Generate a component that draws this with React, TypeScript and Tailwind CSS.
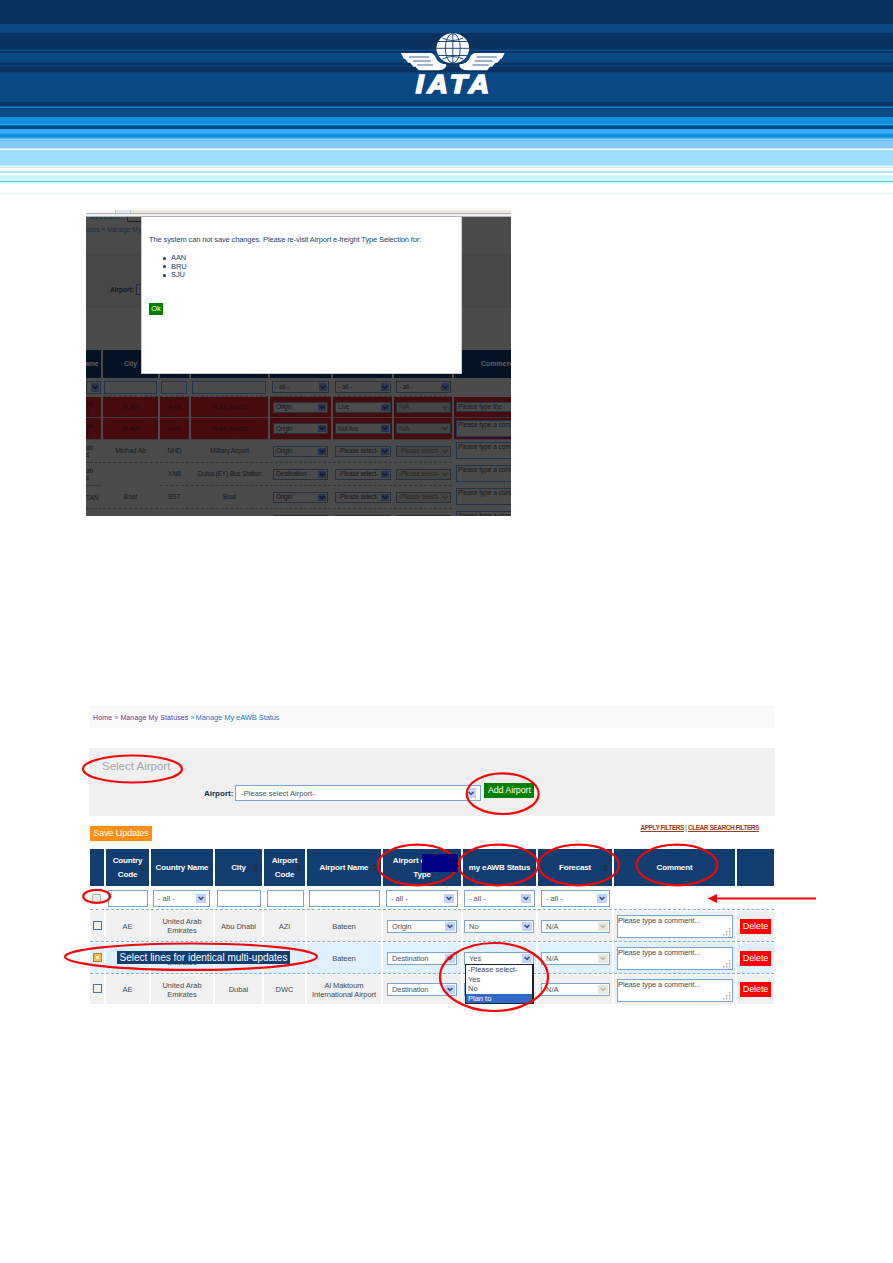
import React from "react";

const stripes: [number, string][] = [
  [24, "#0a3261"], [9, "#084885"], [16, "#0a3261"], [1, "#0a3c70"], [1, "#0a5090"], [1, "#0a3261"], [1, "#0a3668"],
  [9, "#084885"], [1, "#0a3a6b"], [2, "#0a3261"], [2, "#0a4275"], [5, "#0a3261"], [1, "#0a4275"], [29, "#084885"],
  [4, "#0a3261"], [1, "#0a62ac"], [1, "#1380cd"], [9, "#084885"], [7, "#1290e0"], [1, "#2aa3ec"], [1, "#0f70b5"],
  [3, "#084885"], [4, "#35acf4"], [1, "#2a9ce8"], [3, "#1290e0"], [1, "#2a9de8"], [1, "#55b4f2"], [1, "#96d5ff"],
  [1, "#62b9f2"], [7, "#86caff"], [1, "#c4e6ff"], [1, "#ffffff"], [15, "#a0deff"], [1, "#c4ecff"], [1, "#ffffff"],
  [1, "#c9f3fa"], [3, "#fdfdfd"], [2, "#b4e6ff"], [2, "#ffffff"], [6, "#cdf8ff"], [1, "#6fbcd8"], [2, "#d4fff8"],
  [9, "#ffffff"], [1, "#d6f5f5"],
];

function Wing() {
  return (
    <>
      <path d="M1 23H31Q34.5 24 36.5 29Q38.5 33.5 46.5 34.5Q46 40.5 37 40.3H18.5L15.5 36.7H13.5L10 32.8H8.2L5 28.8H3.8Z" fill="#fff" />
      <path d="M9 27H29M13 31H31M17 35H33" stroke="#0a4079" strokeWidth="0.8" />
    </>
  );
}

function Logo() {
  return (
    <svg className="absolute left-[400px] top-[30px]" width="106" height="68" viewBox="0 0 106 68">
      <ellipse cx="52.8" cy="18.3" rx="16.4" ry="15" fill="#fff" />
      <g stroke="#0a3b70" strokeWidth="0.9" fill="none">
        <path d="M52.8 3v31M38 11.5h29.6M36.5 18.3h32.6M38 25.5h29.6" />
        <ellipse cx="52.8" cy="18.3" rx="7.5" ry="14.8" />
        <path d="M42.5 8q10 5 20.6 0M42.5 29q10-5 20.6 0" />
      </g>
      <Wing />
      <g transform="translate(105.6 0) scale(-1 1)"><Wing /></g>
      <text transform="translate(15.8 62.6) scale(1.1 1)" fontFamily="Liberation Sans" fontWeight="700" fontStyle="italic" fontSize="25.5" textLength="66.5" fill="#fff" stroke="#fff" strokeWidth="1.7">IATA</text>
    </svg>
  );
}

function Arrow({ tone }: { tone: "blue" | "gray" | "dim" | "dimgray" }) {
  const bg = { blue: "bg-[#c3d3fb]", gray: "bg-[#e9e8e0]", dim: "bg-[#2c3550]", dimgray: "bg-[#454541]" }[tone];
  const st = { blue: "#405080", gray: "#bcbbb0", dim: "#101a30", dimgray: "#2f2f2c" }[tone];
  return (
    <span className={`flex h-full shrink-0 items-center justify-center ${tone.startsWith("dim") ? "w-[8px]" : "w-[10px]"} ${bg}`}>
      <svg width="6" height="5" viewBox="0 0 6 5"><path d="M.6 1L3 3.4L5.4 1" stroke={st} strokeWidth="1.6" fill="none" /></svg>
    </span>
  );
}

function Pick({ text, cls, tone = "blue" }: { text: string; cls: string; tone?: "blue" | "gray" | "dim" | "dimgray" }) {
  const dim = tone.startsWith("dim");
  return (
    <div className={`flex items-center justify-between border p-px ${dim ? "border-[#252f3d] pl-[2px]" : "border-[#7ba6d2] bg-white pl-[4px] text-[#4a5560]"} ${tone === "dimgray" ? "bg-[#454541] text-[#262626]" : ""} ${cls}`}>
      <span className="whitespace-nowrap">{text}</span>
      <Arrow tone={tone} />
    </div>
  );
}

const dimGrid = "grid w-[425px] grid-cols-[15px_55px_29px_77px_61px_59px_58px_57px] gap-x-[2px]";
const dimDash = "border-b border-dashed border-[#2e363f]";

const dimRows = [
  { red: true, h: "h-[21px]", a: ["ab", "s"], city: "Al Ain", code: "AAN", name: "Al Ain Airport", type: "Origin", st: "Live", fc: "N/A", c: "Please type the" },
  { red: true, h: "h-[22px]", a: ["ab", "s"], city: "Al Ain", code: "AAN", name: "Al Ain Airport", type: "Origin", st: "Not live", fc: "N/A", c: "Please type a comment..." },
  { red: false, h: "h-[23px]", a: ["ab", "s"], city: "Minhad Ab", code: "NHD", name: "Military Airport", type: "Origin", st: "-Please select-", fc: "-Please select-", c: "Please type a comment..." },
  { red: false, h: "h-[23px]", a: ["ab", "s"], city: "", code: "XNB", name: "Dubai (EY) Bus Station", type: "Destination", st: "-Please select-", fc: "-Please select-", c: "Please type a comment..." },
  { red: false, h: "h-[23px]", a: ["TAN"], city: "Boat", code: "BST", name: "Boat", type: "Origin", st: "-Please select-", fc: "-Please select-", c: "Please type a comment..." },
  { red: false, h: "h-[23px]", a: [], city: "", code: "", name: "", type: "Origin", st: "-Please select-", fc: "-Please select-", c: "Please type a comment..." },
];

function ErrorShot() {
  return (
    <section className="relative ml-[86px] mt-[16px] h-[306px] w-[425px] overflow-hidden bg-[#4b4b4b] text-[6.5px] leading-[8px] text-[#14181e]">
      <div className="flex h-[3px]">
        <div className="w-[29px] bg-[#f5f6fc]" />
        <div className="w-[16px] border-x border-[#b8c4d8] bg-[#dde6f8]" />
        <div className="flex-1 bg-[#ece9d8]" />
      </div>
      <div className="h-[4px] border-y border-[#b0b3b5] bg-[#f1f1ef]" />
      <div className="flex h-[36px] flex-col justify-between overflow-hidden whitespace-nowrap pb-[19px] text-[#16304c]">
        <div className="-mt-[4px] flex gap-[4px] pl-[4px] font-bold"><span className="tracking-[.6px]">Account:</span><span className="h-[9px] w-[30px] border border-[#222]" /></div>
        <div>uses » Manage My e-</div>
      </div>
      <div className="flex h-[55px] items-end gap-[2px] bg-[#474747] pb-[13px] pl-[24px]">
        <span className="pb-[1px] font-bold text-[#111820]">Airport:</span>
        <span className="h-[11px] w-[200px] border border-[#1d2c40] pl-[2px]">-</span>
      </div>
      <div className="h-[42px]" />
      <div className={`${dimGrid} h-[28px] text-center text-[7px] font-bold text-[#59616b] [&>div]:bg-[#051225] [&>div]:pt-[10px]`}>
        <div className="overflow-hidden text-left"><span className="-ml-[1px] tracking-[-.2px]">ame</span></div><div>City</div><div /><div /><div /><div /><div />
        <div className="overflow-hidden whitespace-nowrap text-left"><span className="ml-[27px]">Comment</span></div>
      </div>
      <div className={`${dimGrid} h-[19px]`}>
        <div className="flex items-start justify-end pt-[3px]"><Pick tone="dim" text="" cls="h-[13px] w-[15px]" /></div>
        {["w-[53px]", "w-[26px]", "w-[74px]"].map((w) => <div key={w} className={`pl-[1px] pt-[3px] ${dimDash}`}><div className={`h-[13px] border border-[#1e3450] ${w}`} /></div>)}
        {["w-[57px]", "w-[56px]", "w-[55px]"].map((w) => <div key={w} className={`pl-[2px] pt-[3px] ${dimDash}`}><Pick tone="dim" text="- all -" cls={`h-[12px] ${w}`} /></div>)}
      </div>
      {dimRows.map((r, i) => {
        const bg = r.red ? "border-b border-[#3f3b41] bg-[#470b0e] bg-clip-padding" : r.city || i !== 2 ? dimDash : "";
        const dimText = r.red ? "text-[#22090c]" : "";
        return (
          <div key={i} className={`${dimGrid} ${r.h} text-center`}>
            <div className={`flex flex-col items-start justify-center overflow-hidden leading-[7px] ${bg} ${dimText}`}>{r.a.map((t) => <span key={t}>{t}</span>)}</div>
            <div className={`flex items-center justify-center ${i === 3 ? "" : bg} ${dimText}`}>{r.city}</div>
            <div className={`flex items-center justify-center ${bg} ${dimText}`}>{r.code}</div>
            <div className={`flex items-center justify-center whitespace-nowrap tracking-[-.15px] ${bg} ${dimText}`}>{r.name}</div>
            <div className={`flex items-center pl-[3px] tracking-[-.2px] ${bg}`}><Pick tone="dim" text={r.type} cls="h-[11px] w-[55px] bg-[#4b4b4b]" /></div>
            <div className={`flex items-center pl-[2px] tracking-[-.2px] ${bg}`}><Pick tone="dim" text={r.st} cls="h-[11px] w-[56px] bg-[#4b4b4b]" /></div>
            <div className={`flex items-center pl-[2px] tracking-[-.2px] ${bg}`}><Pick tone="dimgray" text={r.fc} cls="h-[11px] w-[55px]" /></div>
            <div className={`overflow-hidden ${r.red ? bg : ""} ${i === 0 ? "pt-[5px]" : "pt-[2px]"}`}>
              <div className={`ml-[2px] w-[70px] whitespace-nowrap border border-[#1e3450] bg-[#4b4b4b] pl-px text-left leading-[8px] tracking-[-.05px] ${i === 0 ? "h-[10px]" : "h-[17px]"}`}>{r.c}</div>
            </div>
          </div>
        );
      })}
      <div className="absolute left-[55px] top-[7px] h-[157px] w-[321px] border border-t-0 border-[#c9cccc] bg-white pl-[7px] pt-[18px] text-[7.5px] leading-[9px] text-[#24476b]">
        <p className="whitespace-nowrap tracking-[-.12px]">The system can not save changes. Please re-visit Airport e-freight Type Selection for:</p>
        <ul className="mt-[10px] pl-[14px] text-[7.5px] leading-[8.6px]">
          {["AAN", "BRU", "SJU"].map((c) => (
            <li key={c} className="flex items-center gap-[5px] tracking-[-.1px]"><span className="size-[3px] rounded-full bg-[#163a60]" />{c}</li>
          ))}
        </ul>
        <button className="mt-[23px] block h-[12px] w-[14px] bg-[#008000] text-center text-[7.5px] leading-[12px] text-white">Ok</button>
      </div>
    </section>
  );
}

const grid = "grid w-[684px] grid-cols-[14px_43px_62px_47px_41px_74px_78px_73px_74px_121px_37px] gap-x-[2px]";

function Head({ lines, sort = true }: { lines: string[]; sort?: boolean }) {
  return (
    <div className="relative flex flex-col items-center justify-center whitespace-nowrap bg-[#113d70] text-[8px] font-bold leading-[14px] tracking-[-.15px] text-white">
      {sort && <svg className="absolute right-[4px] top-[15px]" width="5" height="7" viewBox="0 0 5 7"><path d="M0 3L2.5 0L5 3ZM0 4L2.5 7L5 4Z" fill="#272f38" /></svg>}
      {lines.map((l) => <span key={l} className="relative">{l}</span>)}
    </div>
  );
}

function Check({ on = false }: { on?: boolean }) {
  return <span className={`-mt-[2px] block size-[9px] border ${on ? "border-[#a98238] bg-[#fbe9b8] shadow-[inset_0_0_0_2px_#f5bd4a]" : "border-[#4d759f] bg-[#f1f1ec]"}`} />;
}

const rows = [
  { bg: "bg-[#f0f0f0]", on: false, cc: "AE", cn: ["United Arab", "Emirates"], city: "Abu Dhabi", code: "AZI", name: ["Bateen"], type: "Origin", st: "No" },
  { bg: "bg-[#e0f0ff]", on: true, cc: "", cn: ["", "Emirates"], city: "", code: "", name: ["Bateen"], type: "Destination", st: "Yes" },
  { bg: "bg-[#f0f0f0]", on: false, cc: "AE", cn: ["United Arab", "Emirates"], city: "Dubai", code: "DWC", name: ["Al Maktoum", "International Airport"], type: "Destination", st: "" },
];
const dash = "border-b border-dashed border-[#86add5]";

function StatusTable() {
  return (
    <div className="ml-[90px] mt-[8px] w-[684px] text-[7.5px] leading-[9px] text-[#424c56]">
      <div className={`${grid} h-[37px]`}>
        <Head lines={[]} sort={false} /><Head lines={["Country", "Code"]} /><Head lines={["Country Name"]} /><Head lines={["City"]} /><Head lines={["Airport", "Code"]} />
        <Head lines={["Airport Name"]} /><Head lines={["Airport e-freight", "Type"]} sort={false} /><Head lines={["my eAWB Status"]} /><Head lines={["Forecast"]} /><Head lines={["Comment"]} sort={false} /><Head lines={[]} sort={false} />
      </div>
      <div className={`${grid} h-[25px]`}>
        <div className={`h-[24px] pl-[2px] pt-[8px] ${dash}`}><span className="block size-[9px] border border-[#b5bec4] bg-[#ebebe6]" /></div>
        <div className={`pl-[2px] pt-[4px] ${dash} h-[24px]`}><div className="h-[17px] w-[40px] border border-[#7ba6d2]" /></div>
        <div className={`pl-[2px] pt-[4px] ${dash} h-[24px]`}><Pick text="- all -" cls="h-[17px] w-[57px] py-[3px] pr-[3px]" /></div>
        <div className={`pl-[2px] pt-[4px] ${dash} h-[24px]`}><div className="h-[17px] w-[44px] border border-[#7ba6d2]" /></div>
        <div className={`pl-[3px] pt-[4px] ${dash} h-[24px]`}><div className="h-[17px] w-[37px] border border-[#7ba6d2]" /></div>
        <div className={`pl-[2px] pt-[4px] ${dash} h-[24px]`}><div className="h-[17px] w-[71px] border border-[#7ba6d2]" /></div>
        <div className={`pl-[3px] pt-[4px] ${dash} h-[24px]`}><Pick text="- all -" cls="h-[17px] w-[72px] py-[3px] pr-[3px]" /></div>
        <div className={`pl-[1px] pt-[4px] ${dash} h-[24px]`}><Pick text="- all -" cls="h-[17px] w-[71px] py-[3px] pr-[3px]" /></div>
        <div className={`pl-[3px] pt-[4px] ${dash} h-[24px]`}><Pick text="- all -" cls="h-[17px] w-[69px] py-[3px] pr-[2px]" /></div>
        <div className={`h-[24px] ${dash}`} /><div className={`h-[24px] ${dash}`} />
      </div>
      {rows.map((r, i) => {
        const b = `${r.bg} ${i < 2 ? dash : ""}`;
        return (
          <div key={i} className={`${grid} text-center ${i < 2 ? "mb-[1px] h-[31px]" : "h-[29px]"}`}>
            <div className={`flex items-center justify-center ${b}`}><Check on={r.on} /></div>
            <div className={`flex items-center justify-center ${b}`}>{r.cc}</div>
            <div className={`flex flex-col items-center justify-center ${b}`}>{r.cn.map((t, k) => <span key={k} className="h-[9px]">{t}</span>)}</div>
            <div className={`flex items-center justify-center ${b}`}>{r.city}</div>
            <div className={`flex items-center justify-center ${b}`}>{r.code}</div>
            <div className={`flex flex-col items-center justify-center whitespace-nowrap ${b}`}>{r.name.map((t) => <span key={t} className="tracking-[-.05px]">{t}</span>)}</div>
            <div className={`flex items-center pl-[4px] tracking-[-.1px] ${b}`}><Pick text={r.type} cls="h-[13px] w-[70px]" /></div>
            <div className={`relative flex items-center pl-[1px] ${b}`}>
              <Pick text={r.st} cls="h-[13px] w-[70px]" />
              {r.on && (
                <div className="absolute left-[2px] top-[21px] z-10 h-[40px] w-[69px] border border-r-2 border-[#182330] bg-white text-left leading-[9.6px]">
                  {["-Please select-", "Yes", "No"].map((t) => <div key={t} className="pl-[2px]">{t}</div>)}
                  <div className="bg-[#316ac5] pl-[2px] text-white">Plan to</div>
                </div>
              )}
            </div>
            <div className={`flex items-center pl-[3px] ${b}`}><Pick tone="gray" text="N/A" cls="h-[13px] w-[69px]" /></div>
            <div className={`pl-[3px] pt-[4px] ${b}`}>
              <div className="flex h-[23px] w-[116px] justify-between border border-[#7ba6d2] bg-white text-left">
                <span className="whitespace-nowrap tracking-[-.1px]">Please type a comment...</span>
                <svg className="mb-[1px] mr-[1px] shrink-0 self-end" width="8" height="8" viewBox="0 0 8 8"><path d="M6 0h1.4v1.4H6zM3 3h1.4v1.4H3zM6 3h1.4v1.4H6zM0 6h1.4v1.4H0zM3 6h1.4v1.4H3zM6 6h1.4v1.4H6z" fill="#aaa" /></svg>
              </div>
            </div>
            <div className={`flex items-center pl-[3px] ${b}`}><button className="h-[15px] w-[31px] bg-[#ff0000] text-[9px] leading-[15px] tracking-[-.1px] text-white">Delete</button></div>
          </div>
        );
      })}
    </div>
  );
}

const rings = [
  [132.5, 769, 49.5, 13.5], [502.7, 793.7, 36, 20.3], [96.7, 896.3, 13.5, 6.5], [191, 956.7, 126, 13.2],
  [417.5, 865, 39.7, 20.3], [498.3, 865, 39.9, 20.3], [578.7, 865, 40.2, 20.3], [677, 865, 40.4, 20.3], [494, 977, 54, 34],
];

export default function App() {
  return (
    <main className="relative h-[1263px] w-[893px] overflow-hidden bg-white font-['Liberation_Sans',sans-serif]">
      <header>
        {stripes.map(([h, c], i) => <div key={i} style={{ height: h, background: c }} />)}
      </header>
      <Logo />
      <ErrorShot />
      <nav className="ml-[89px] mt-[189px] flex h-[23px] w-[686px] items-center whitespace-nowrap bg-[#fafafa] pl-[4px] pt-[3px] text-[7px] text-[#6c3494]">
        <span className="tracking-[.13px]">Home <span className="text-[#2b83c0]">»</span> Manage My Statuses <span className="text-[#2b83c0]">»</span></span>
        <span className="ml-[1px] text-[7.5px] tracking-[-.08px] text-[#1a7cc4]">Manage My eAWB Status</span>
      </nav>
      <section className="ml-[89px] mt-[20px] h-[68px] w-[686px] bg-[#f0f0f0] pt-[10px]">
        <h2 className="ml-[13px] text-[11.5px] leading-[16px] text-[#a6a6a6]">Select Airport</h2>
        <div className="mt-[9px] flex items-start pl-[115px]">
          <label className="mt-[6px] text-[8px] font-bold leading-[9px] text-[#0c2c50]">Airport:</label>
          <div className="ml-[2px] mt-[2px] flex h-[16px] w-[246px] items-center justify-between border border-[#7ba6d2] bg-white py-[2px] pl-[5px] pr-[4px] text-[7.5px] leading-[9px] text-[#4a5560]"><span>-Please select Airport-</span><Arrow tone="blue" /></div>
          <button className="ml-[3px] h-[15px] w-[50px] whitespace-nowrap bg-[#008000] text-[9px] leading-[15px] tracking-[-.15px] text-white">Add Airport</button>
        </div>
      </section>
      <div className="ml-[90px] mt-[10px] flex h-[15px] w-[669px] justify-between">
        <button className="h-[15px] w-[62px] whitespace-nowrap bg-[#fd8f14] text-[9px] leading-[15px] tracking-[-.1px] text-white">Save Updates</button>
        <div className="-mt-[2px] whitespace-nowrap text-[6.5px] font-bold leading-[8px] tracking-[-.45px] text-[#9c3d26]"><a className="underline">APPLY FILTERS</a> <span className="font-normal text-[#456]">|</span> <a className="underline">CLEAR SEARCH FILTERS</a></div>
      </div>
      <StatusTable />
      <svg className="pointer-events-none absolute left-0 top-0 z-20" width="893" height="1263">
        <g fill="none" stroke="#f50505" strokeWidth="2.2">
          {rings.map(([x, y, a, b], i) => <ellipse key={i} cx={x} cy={y} rx={a} ry={b} />)}
          <path d="M816 898.5H715" />
        </g>
        <path d="M707.5 898.5L717 894V903Z" fill="#f50505" />
      </svg>
      <div className="absolute left-[422px] top-[854px] z-20 h-[18px] w-[36px] bg-[#000080]" />
      <div className="absolute left-[117px] top-[951px] z-20 h-[13px] w-[173px] whitespace-nowrap bg-[#113d70] text-center text-[10px] leading-[13px] text-white">Select lines for identical multi-updates</div>
    </main>
  );
}
